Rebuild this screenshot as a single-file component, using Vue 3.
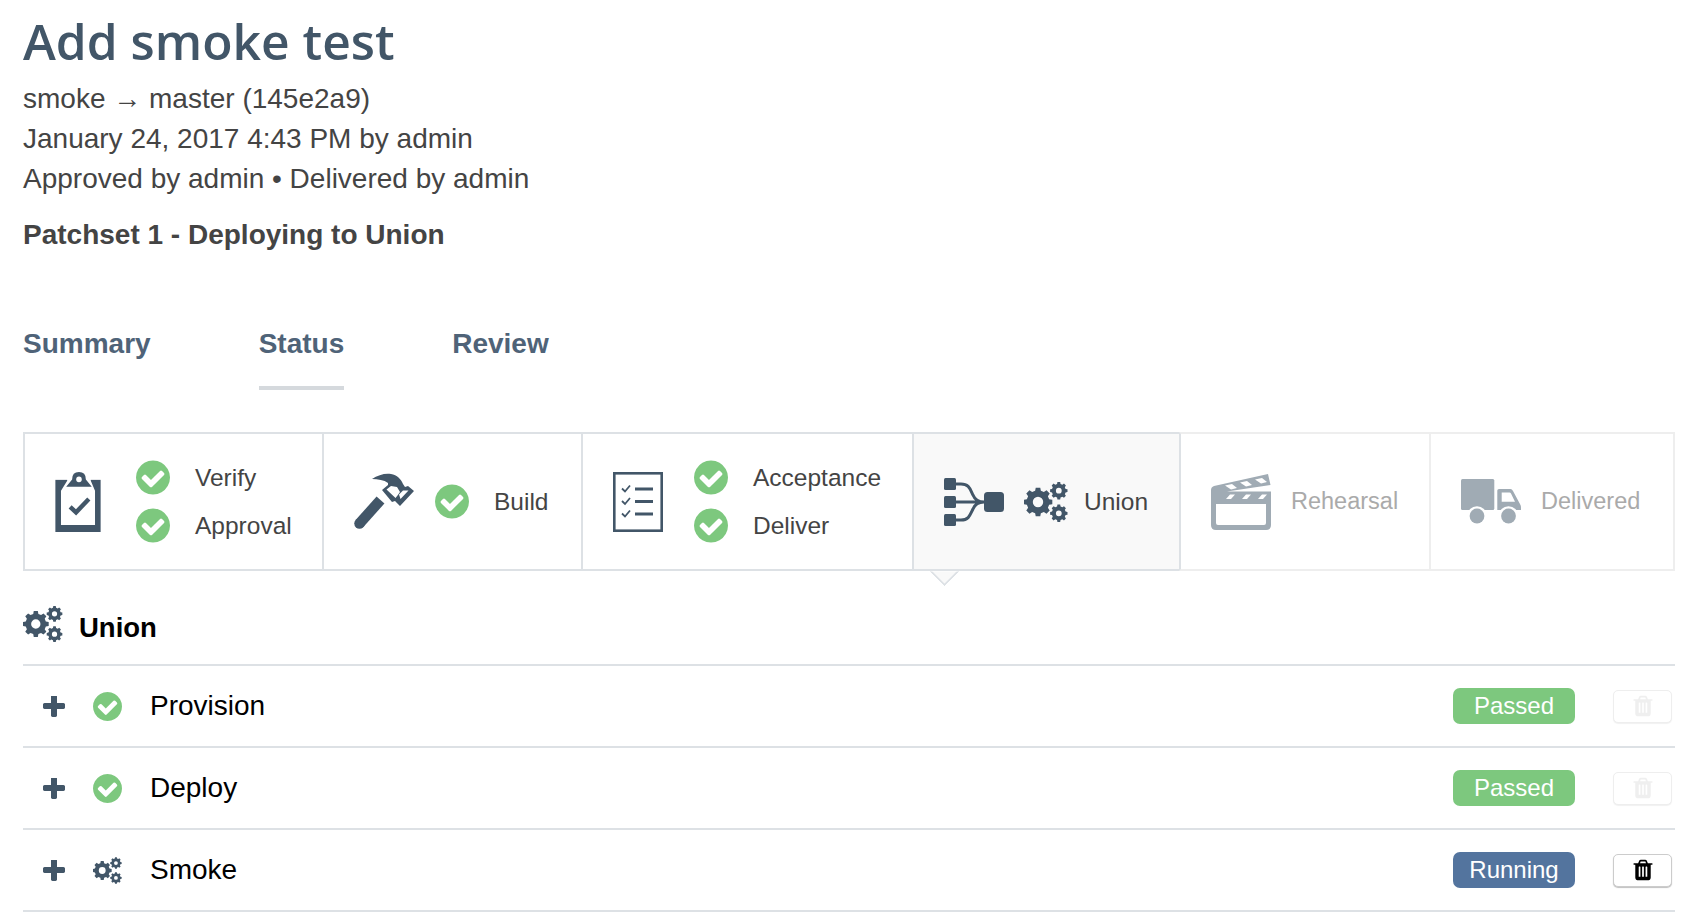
<script setup>
function gear(cx, cy, r, root, hole, teeth = 8) {
  const step = (Math.PI * 2) / teeth
  let d = ''
  for (let i = 0; i < teeth; i++) {
    const a = i * step
    const pts = [
      [root, a - step * 0.32],
      [r, a - step * 0.2],
      [r, a + step * 0.2],
      [root, a + step * 0.32],
    ]
    pts.forEach(([rad, ang], j) => {
      const x = (cx + rad * Math.cos(ang)).toFixed(2)
      const y = (cy + rad * Math.sin(ang)).toFixed(2)
      d += (i === 0 && j === 0 ? 'M' : 'L') + x + ' ' + y + ' '
    })
  }
  d += `Z M${cx - hole} ${cy} a${hole} ${hole} 0 1 0 ${hole * 2} 0 a${hole} ${hole} 0 1 0 ${-hole * 2} 0 Z `
  return d
}

const gearsPath = gear(14, 20, 14.5, 11.5, 5.2) + gear(34.8, 8.7, 8.8, 7, 2.9) + gear(34.8, 31.3, 8.8, 7, 2.9)

const checkPath = 'M1412 734q0-28-18-46l-91-90q-19-19-45-19t-45 19l-408 407-226-226q-19-19-45-19t-45 19l-91 90q-18 18-18 46 0 27 18 45l362 362q19 19 45 19 27 0 46-19l543-543q18-18 18-45zm252 162q0 209-103 385.500t-279.500 279.500-385.500 103-385.500-103-279.500-279.500-103-385.500 103-385.500 279.500-279.500 385.500-103 385.500 103 279.500 279.500 103 385.500z'
const plusPath = 'M1600 736v192q0 40-28 68t-68 28h-416v416q0 40-28 68t-68 28h-192q-40 0-68-28t-28-68v-416h-416q-40 0-68-28t-28-68v-192q0-40 28-68t68-28h416v-416q0-40 28-68t68-28h192q40 0 68 28t28 68v416h416q40 0 68 28t28 68z'
const trashPath = 'M704 1376v-704q0-14-9-23t-23-9h-64q-14 0-23 9t-9 23v704q0 14 9 23t23 9h64q14 0 23-9t9-23zm256 0v-704q0-14-9-23t-23-9h-64q-14 0-23 9t-9 23v704q0 14 9 23t23 9h64q14 0 23-9t9-23zm256 0v-704q0-14-9-23t-23-9h-64q-14 0-23 9t-9 23v704q0 14 9 23t23 9h64q14 0 23-9t9-23zm-544-992h448l-48-117q-7-9-17-11h-317q-10 2-17 11zm928 32v64q0 14-9 23t-23 9h-96v948q0 83-47 143.500t-113 60.500h-832q-66 0-113-58.500t-47-141.500v-952h-96q-14 0-23-9t-9-23v-64q0-14 9-23t23-9h309l70-167q15-37 54-63t79-26h320q40 0 79 26t54 63l70 167h309q14 0 23 9t9 23z'

const jobs = [
  { name: 'Provision', status: 'Passed', done: true },
  { name: 'Deploy', status: 'Passed', done: true },
  { name: 'Smoke', status: 'Running', done: false },
]
</script>

<template>
  <div class="page">
    <h1 class="title">Add smoke test</h1>
    <p class="meta">smoke → master (145e2a9)</p>
    <p class="meta">January 24, 2017 4:43 PM by admin</p>
    <p class="meta">Approved by admin • Delivered by admin</p>
    <p class="patchset">Patchset 1 - Deploying to Union</p>

    <nav class="tabs">
      <a class="tab">Summary</a>
      <a class="tab active">Status</a>
      <a class="tab">Review</a>
    </nav>

    <div class="pipeline">
      <div class="stage">
        <div class="stage-icon">
          <svg width="46" height="60" viewBox="7 6 46 61">
            <rect x="7" y="14" width="46" height="53" fill="#425668" />
            <path d="M12.700 60V25L19 15V12H43V15L47.300 25V60Z" fill="#fff" />
            <path d="M18 21L24 13.500Q24 6 31 6Q38 6 38 13.500L44 21Z" fill="#425668" />
            <circle cx="31" cy="13.500" r="2.800" fill="#fff" />
            <path d="M22 41.500L28 47L41 33.500" fill="none" stroke="#425668" stroke-width="4.500" />
          </svg>
        </div>
        <div class="phases">
          <div class="phase">
            <svg class="check" viewBox="128 128 1536 1536"><path :d="checkPath" /></svg>
            <span>Verify</span>
          </div>
          <div class="phase">
            <svg class="check" viewBox="128 128 1536 1536"><path :d="checkPath" /></svg>
            <span>Approval</span>
          </div>
        </div>
      </div>

      <div class="stage">
        <div class="stage-icon">
          <svg width="60" height="57" viewBox="9 8 60 57">
            <path d="M14.500 58.500L35.500 35" fill="none" stroke="#425668" stroke-width="10.500" />
            <circle cx="14.500" cy="58.500" r="5.250" fill="#425668" />
            <path d="M27 14C33 10 40 8 46 9C52 10 56 14 58 19L60 22L63 21L69 26L55 41L50 36L47 37L37 25L43 20L43 18C39 15 33 14 27 14Z" fill="#425668" />
            <path d="M41.500 24.500L46 21L52 22L55 27L52.500 30.500L50.500 33ZM58 25.500H63.500L55.500 34L54 29.500Z" fill="#fff" />
          </svg>
        </div>
        <div class="phases">
          <div class="phase">
            <svg class="check" viewBox="128 128 1536 1536"><path :d="checkPath" /></svg>
            <span>Build</span>
          </div>
        </div>
      </div>

      <div class="stage">
        <div class="stage-icon">
          <svg width="50" height="60" viewBox="0 0 50 60">
            <rect x="1.300" y="1.300" width="47.400" height="57.400" fill="none" stroke="#425668" stroke-width="2.600" />
            <path d="M9 16.500L12 19.500L17 13.500M9 29L12 32L17 26M9 41.500L12 44.500L17 38.500" fill="none" stroke="#425668" stroke-width="1.800" />
            <path d="M22 17H40M22 29.500H40M22 42H40" fill="none" stroke="#425668" stroke-width="2.800" />
          </svg>
        </div>
        <div class="phases">
          <div class="phase">
            <svg class="check" viewBox="128 128 1536 1536"><path :d="checkPath" /></svg>
            <span>Acceptance</span>
          </div>
          <div class="phase">
            <svg class="check" viewBox="128 128 1536 1536"><path :d="checkPath" /></svg>
            <span>Deliver</span>
          </div>
        </div>
      </div>

      <div class="stage current">
        <div class="stage-icon">
          <svg width="60" height="48" viewBox="24 27 60 48">
            <rect x="24" y="27" width="12" height="12" rx="1.500" fill="#425668" />
            <rect x="24" y="45" width="12" height="12" rx="1.500" fill="#425668" />
            <rect x="24" y="63" width="12" height="12" rx="1.500" fill="#425668" />
            <rect x="64" y="41" width="20" height="20" rx="3.500" fill="#425668" />
            <path d="M36 51H64M36 33H41C49 33 50 38 53 44C55 49 58 51 64 51M36 69H41C49 69 50 64 53 58C55 53 58 51 64 51" fill="none" stroke="#425668" stroke-width="3" />
          </svg>
        </div>
        <div class="phases">
          <div class="phase">
            <svg class="gears" width="44" height="40" viewBox="0 0 44 40"><path :d="gearsPath" fill-rule="evenodd" /></svg>
            <span>Union</span>
          </div>
        </div>
        <i class="pointer"></i>
      </div>

      <div class="stage pending">
        <div class="stage-icon">
          <svg width="60" height="56" viewBox="6 7 60 56">
            <path fill-rule="evenodd" d="M9 19L63 7L65.500 18L22 24.500H66V58Q66 63 61 63H11Q6 63 6 58V23Q6 20 9 19ZM11 37V56Q11 58 13 58H59Q61 58 61 56V37Z" fill="#a0abb4" />
            <path d="M20 18.500L27 17L32 21L26 22.500ZM35 15.500L42 14L47 18L41 19.500ZM50 12.500L57 11L62 15L56 16.500ZM21 32L25 27.500H30L26 32ZM37 32L41 27.500H46L42 32ZM53 32L57 27.500H62L58 32Z" fill="#fff" />
          </svg>
        </div>
        <div class="phases">
          <div class="phase"><span>Rehearsal</span></div>
        </div>
      </div>

      <div class="stage pending last">
        <div class="stage-icon">
          <svg width="60" height="45" viewBox="6 9 60 45">
            <rect x="6" y="9" width="33.300" height="31" rx="1.500" fill="#a0abb4" />
            <path fill-rule="evenodd" d="M42.300 20.500Q42.300 19 44 19H55.500Q57 19 58 21L65.500 35Q66 36 66 38V40H42.300ZM46.700 22.500V31.700H60L56 23.500Q55.500 22.500 54.500 22.500Z" fill="#a0abb4" />
            <circle cx="22" cy="46" r="9.800" fill="#fff" />
            <circle cx="22" cy="46" r="7.400" fill="#a0abb4" />
            <circle cx="53.500" cy="46" r="9.800" fill="#fff" />
            <circle cx="53.500" cy="46" r="7.400" fill="#a0abb4" />
          </svg>
        </div>
        <div class="phases">
          <div class="phase"><span>Delivered</span></div>
        </div>
      </div>
    </div>

    <div class="stage-head">
      <svg class="head-gears" width="40" height="36" viewBox="0 0 44 40"><path :d="gearsPath" fill-rule="evenodd" /></svg>
      <span>Union</span>
    </div>

    <div v-for="job in jobs" :key="job.name" class="job">
      <svg class="plus" viewBox="192 192 1408 1408"><path :d="plusPath" /></svg>
      <span class="job-state">
        <svg v-if="job.done" class="job-check" viewBox="128 128 1536 1536"><path :d="checkPath" /></svg>
        <svg v-else width="29" height="27" viewBox="0 0 44 40"><path :d="gearsPath" fill-rule="evenodd" fill="#425668" /></svg>
      </span>
      <span class="job-name">{{ job.name }}</span>
      <span class="badge" :class="job.done ? 'passed' : 'running'">{{ job.status }}</span>
      <button class="delete" :class="{ disabled: job.done }">
        <svg width="24" height="24" viewBox="0 0 1792 1792"><path :d="trashPath" /></svg>
      </button>
    </div>
  </div>
</template>

<style>
html,
body {
  margin: 0;
  background: #fff;
}
</style>

<style scoped>
.page {
  padding: 0 22px 12px 23px;
  font-family: "Liberation Sans", Arial, sans-serif;
  color: #444;
}

.title {
  margin: 0;
  padding-top: 4px;
  font-family: "Open Sans", Lato, sans-serif;
  font-size: 49.700px;
  font-weight: 600;
  line-height: 74.500px;
  color: #425668;
}

.meta {
  margin: 0;
  font-size: 28px;
  line-height: 40px;
}

.patchset {
  margin: 16px 0 0;
  font-size: 28px;
  font-weight: 700;
  line-height: 40px;
}

.tabs {
  display: flex;
  gap: 108px;
  margin-top: 69.500px;
}

.tab {
  padding-bottom: 22px;
  border-bottom: 4px solid transparent;
  font-size: 28px;
  font-weight: 700;
  line-height: 40px;
  color: #4f6378;
}

.tab.active {
  border-bottom-color: #d5d9dd;
}

.pipeline {
  display: grid;
  grid-template-columns: 299px 259px 331px 267px 250px 246px;
  margin-top: 42px;
}

.stage {
  position: relative;
  display: flex;
  align-items: center;
  gap: 20px;
  height: 139px;
  padding-left: 30px;
  box-sizing: border-box;
  border: 2px solid #dde1e5;
  border-right: 0;
  font-size: 24.500px;
}

.stage.current {
  background: #f9f9f9;
}

.stage.pending {
  border-top-color: #eee;
  border-bottom-color: #eee;
  color: #aaa;
  font-size: 23.500px;
}

.stage.pending + .stage.pending {
  border-left-color: #eee;
}

.stage.last {
  border-right: 2px solid #eee;
}

.stage-icon {
  display: flex;
  flex: none;
  width: 60px;
}

.phases {
  display: flex;
  flex-direction: column;
  gap: 13px;
}

.phase {
  display: flex;
  align-items: center;
  gap: 25px;
  height: 35px;
}

.check {
  width: 34px;
  height: 35px;
  margin-left: 1px;
  fill: #7dc87e;
}

.gears {
  margin-right: -9px;
  fill: #425668;
}

.pointer {
  position: absolute;
  left: 20px;
  bottom: -13px;
  width: 21px;
  height: 21px;
  box-sizing: border-box;
  background: #f9f9f9;
  border-right: 2px solid #dde1e5;
  border-bottom: 2px solid #dde1e5;
  transform: rotate(45deg);
  clip-path: polygon(100% 0, 100% 100%, 0 100%);
}

.stage-head {
  display: flex;
  align-items: center;
  gap: 16px;
  height: 95px;
  box-sizing: border-box;
  padding-top: 21px;
  border-bottom: 2px solid #dde1e5;
  font-size: 27.500px;
  font-weight: 700;
  color: #000;
}

.head-gears {
  fill: #425668;
  margin-top: -8px;
}

.job {
  display: flex;
  align-items: center;
  height: 82px;
  box-sizing: border-box;
  padding: 0 3px 0 20px;
  border-bottom: 2px solid #dde1e5;
  color: #000;
}

.plus {
  flex: none;
  width: 22px;
  height: 22px;
  margin-top: 1px;
  fill: #425668;
}

.job-state {
  display: flex;
  flex: none;
  justify-content: center;
  width: 29px;
  margin: 0 28px 0 28px;
}

.job-check {
  width: 29px;
  height: 29px;
  fill: #7dc87e;
}

.job-name {
  flex: 1;
  font-size: 28px;
}

.badge {
  flex: none;
  width: 122px;
  height: 36px;
  border-radius: 7px;
  font-size: 24px;
  line-height: 36px;
  text-align: center;
  color: #fff;
}

.badge.passed {
  background: #7dc87e;
}

.badge.running {
  background: #53749e;
}

.delete {
  display: flex;
  flex: none;
  align-items: center;
  justify-content: center;
  width: 59px;
  height: 33px;
  margin-left: 38px;
  padding: 0;
  background: #fff;
  border: 1px solid #ccc;
  border-radius: 5px;
  box-shadow: 0 1px 1px rgba(0, 0, 0, 0.25);
}

.delete.disabled {
  border-color: #eee;
  box-shadow: 0 1px 1px rgba(0, 0, 0, 0.06);
}

.delete.disabled svg {
  opacity: 0.06;
}
</style>
